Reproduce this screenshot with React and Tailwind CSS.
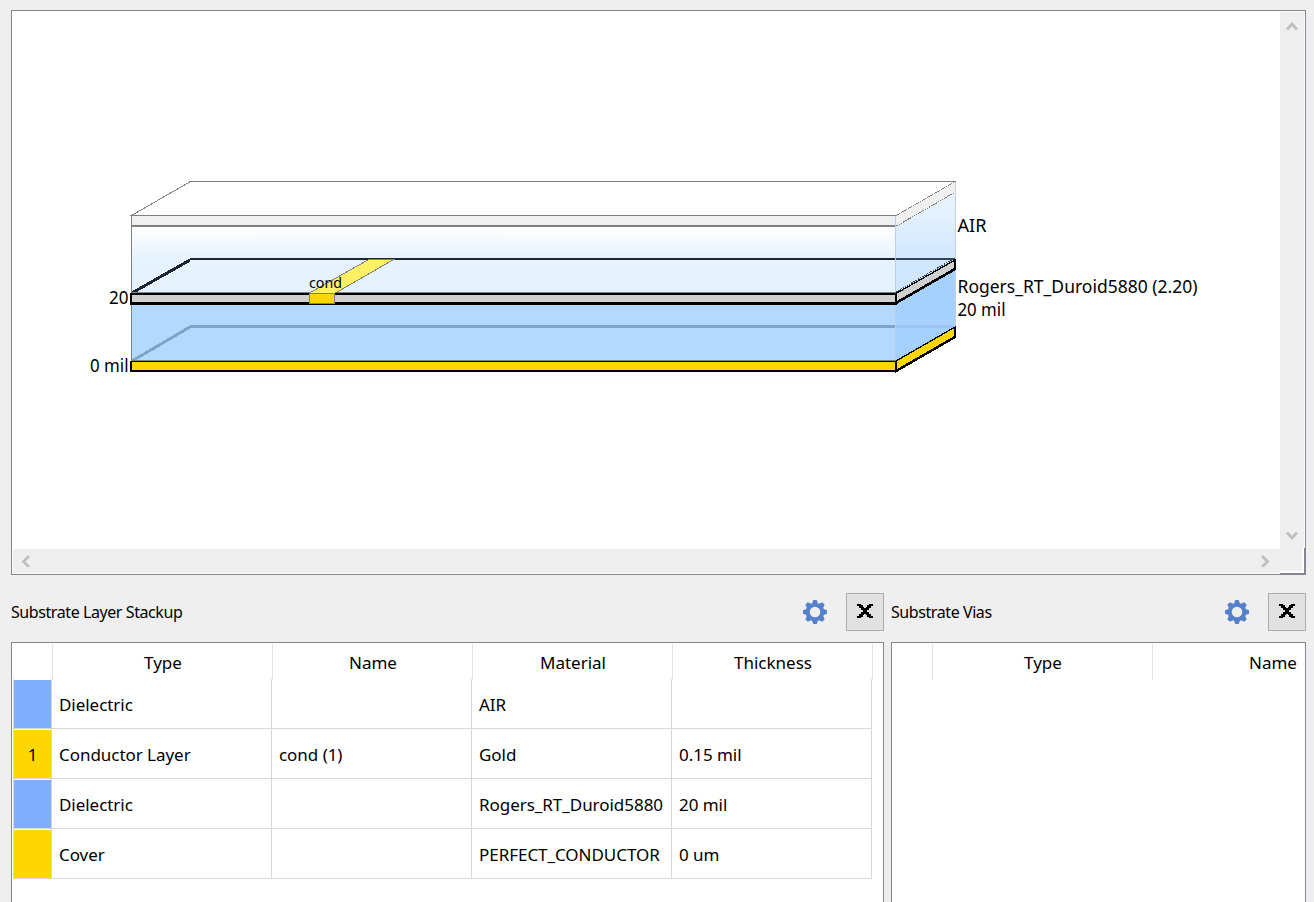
import React from "react";

const rows = [
  { id: "", color: "bg-[#80afff]", type: "Dielectric", name: "", material: "AIR", thickness: "" },
  { id: "1", color: "bg-[#ffd700]", type: "Conductor Layer", name: "cond (1)", material: "Gold", thickness: "0.15 mil" },
  { id: "", color: "bg-[#80afff]", type: "Dielectric", name: "", material: "Rogers_RT_Duroid5880", thickness: "20 mil" },
  { id: "", color: "bg-[#ffd700]", type: "Cover", name: "", material: "PERFECT_CONDUCTOR", thickness: "0 um" },
];

const rotations = [0, 45, 90, 135, 180, 225, 270, 315];

function Gear() {
  return (
    <svg width="26" height="26" viewBox="-13 -13 26 26" className="block shrink-0">
      <circle r="7.3" fill="none" stroke="#5580cc" strokeWidth="4" />
      {rotations.map((r) => (
        <path key={r} d="M-3 -8.500L-1.700 -12H1.700L3 -8.500Z" fill="#5580cc" transform={`rotate(${r})`} />
      ))}
    </svg>
  );
}

function CloseButton() {
  return (
    <button className="flex h-[38px] w-[38px] shrink-0 items-center justify-center border border-[#adadad] bg-[#e1e1e1]">
      <svg width="16" height="14" viewBox="0 0 16 14" className="mb-[3px]" shapeRendering="crispEdges">
        <path
          d="M0 0H4V1H6V3H7V4H9V3H10V1H12V0H16V2H14V4H12V6H10V8H12V10H14V12H16V14H12V13H10V11H9V10H7V11H6V13H4V14H0V12H2V10H4V8H6V6H4V4H2V2H0Z"
          fill="#000"
        />
      </svg>
    </button>
  );
}

function Chevron({ d, className }) {
  return (
    <svg width="12" height="12" viewBox="0 0 12 12" className={className}>
      <path d={d} fill="none" stroke="#bfbfbf" strokeWidth="2.8" />
    </svg>
  );
}

function Stackup() {
  return (
    <svg width="1267" height="537" viewBox="13 12 1267 537" className="block" fontFamily="'Noto Sans', 'Open Sans', sans-serif">
      <defs>
        <linearGradient id="airFront" gradientUnits="userSpaceOnUse" x1="0" y1="227" x2="0" y2="259">
          <stop offset="0" stopColor="#fff" />
          <stop offset="1" stopColor="#e6f2ff" />
        </linearGradient>
        <linearGradient id="airSide" gradientUnits="userSpaceOnUse" x1="0" y1="205" x2="0" y2="262">
          <stop offset="0" stopColor="#e6f2ff" />
          <stop offset="1" stopColor="#d1e7ff" />
        </linearGradient>
      </defs>
      <g shapeRendering="crispEdges">
        {/* dielectric bodies */}
        <path d="M131 227H896V293H131Z" fill="url(#airFront)" />
        <path d="M896 226L956 192V259L896 293Z" fill="url(#airSide)" />
        <path d="M131 304H896V361H131Z" fill="#b3d9ff" />
        <path d="M896 303L956 269V327L896 361Z" fill="#a5d0ff" />
        {/* back edges seen through the dielectrics */}
        <path d="M132 361L190 327" fill="none" stroke="#7fa4ca" strokeWidth="3" />
        <path d="M190 325H896V328H190Z" fill="#7fa4ca" />
        <path d="M896 325H955V328H896Z" fill="#9bc4f2" />
        <path d="M132 293L190 260" fill="none" stroke="#1a2433" strokeWidth="3" />
        <path d="M190 258H896V260H190Z" fill="#1a2433" />
        <path d="M896 258H955V260H896Z" fill="#33455e" />
        {/* top cover */}
        <path d="M131.500 215.500L190.500 181.500H955.500L896.500 215.500Z" fill="#fff" stroke="#808080" />
        <path d="M131 216H896V225H131Z" fill="#f0f0f0" />
        <path d="M896 216L955 182V192L896 226Z" fill="#f0f0f0" />
        <path d="M131 225H896V227H131Z" fill="#808080" />
        <path d="M896.500 226L955.500 192" stroke="#808080" strokeDasharray="1.7 0.8" />
        <path d="M131 215H132V361H131Z" fill="#808080" />
        <path d="M955.500 182V327" stroke="#c7ced6" />
        {/* conductor layer */}
        <path d="M896 293L955 259V269L896 303Z" fill="#d0d0d0" />
        <path d="M896 292L954 258.500" stroke="#33455e" strokeDasharray="1.7 0.8" />
        <path d="M896 293.500L955 260" stroke="#000" strokeWidth="1.300" />
        <path d="M955 259V269L896 303" fill="none" stroke="#000" strokeWidth="2.600" />
        <path d="M130 293H897V305H130Z" fill="#000" />
        <path d="M132 295H895V302H132Z" fill="#d0d0d0" />
        <path d="M131 292H896V293H131Z" fill="#808080" />
        <path d="M309.500 293.500L369.500 259H395.500L335.500 293.500Z" fill="#fff066" />
        <path d="M309.500 293L369.500 259H394.500L335.500 293" fill="none" stroke="#808080" />
        <path d="M309.500 293.500H334.500V303.500H309.500Z" fill="#ffd700" stroke="#808080" />
        {/* bottom cover */}
        <path d="M896 361L955 327V337L896 371Z" fill="#ffd700" stroke="#000" strokeWidth="1.300" />
        <path d="M955 327V337L896 371V361" fill="none" stroke="#000" strokeWidth="2.500" />
        <path d="M130 361H897V372H130Z" fill="#000" />
        <path d="M132 362H895V370H132Z" fill="#ffd700" />
        <path d="M131 360H896V361H131Z" fill="#808080" />
        <path d="M895 216H896V292H895ZM895 305H896V360H895Z" fill="#c0cfde" />
      </g>
      <g fill="#000" fontSize="17.6">
        <text x="957.500" y="232" textLength="29" lengthAdjust="spacingAndGlyphs">AIR</text>
        <text x="957.500" y="293" textLength="240" lengthAdjust="spacingAndGlyphs">Rogers_RT_Duroid5880 (2.20)</text>
        <text x="957.500" y="316" textLength="48" lengthAdjust="spacingAndGlyphs">20 mil</text>
        <text x="109" y="304" textLength="19.500" lengthAdjust="spacingAndGlyphs">20</text>
        <text x="90" y="372" textLength="38.500" lengthAdjust="spacingAndGlyphs">0 mil</text>
        <text x="309" y="288" fontSize="14.500" textLength="33" lengthAdjust="spacingAndGlyphs">cond</text>
      </g>
    </svg>
  );
}

function HeaderCell({ children }) {
  return (
    <div className="flex h-[36px] items-center justify-center border-r border-[#e3e3e3] pl-px pt-px">
      <span>{children}</span>
    </div>
  );
}

function Cell({ children }) {
  return (
    <div className="flex h-[50px] items-center whitespace-nowrap border-b border-r border-[#d8d8d8] pl-[7px] pt-0.5">
      <span>{children}</span>
    </div>
  );
}

function PanelTitle({ children }) {
  return (
    <div className="flex h-[38px] items-center">
      <span className="grow text-[16px] tracking-[-0.42px]">{children}</span>
      <Gear />
      <div className="w-[18px]" />
      <CloseButton />
    </div>
  );
}

export default function App() {
  return (
    <div className="flex h-[902px] w-[1314px] flex-col overflow-hidden bg-[#efefef] pl-[11px] pr-2 pt-2.5 font-['Noto_Sans','Open_Sans',sans-serif] text-[17px] text-black">
      <div className="grid h-[565px] shrink-0 grid-cols-[1267px_1fr] grid-rows-[537px_1fr] border border-[#828790] bg-white p-px">
        <Stackup />
        <div className="flex flex-col items-center justify-between bg-[#efefef] pb-[7px] pt-2">
          <Chevron d="M1 9.500L6 4L11 9.500" />
          <Chevron d="M1 2.500L6 8L11 2.500" />
        </div>
        <div className="flex items-center justify-between bg-[#efefef] pl-[7px] pr-[9px]">
          <Chevron d="M9 1L3.500 6.500L9 12" />
          <Chevron d="M3 1L8.500 6.500L3 12" />
        </div>
        <div className="-mb-px -mr-px -mt-px border-b border-r border-[#828790] bg-white pb-0.5 pr-0.5">
          <div className="h-full bg-[#efefef]" />
        </div>
      </div>

      <div className="mt-[18px] flex grow gap-[7px]">
        <section className="flex w-[873px] shrink-0 flex-col">
          <PanelTitle>Substrate Layer Stackup</PanelTitle>
          <div className="mt-[11px] grow border border-b-0 border-[#828790] bg-white pl-px pt-px">
            <div className="grid grid-cols-[40px_220px_200px_200px_200px]">
              <HeaderCell />
              <HeaderCell>Type</HeaderCell>
              <HeaderCell>Name</HeaderCell>
              <HeaderCell>Material</HeaderCell>
              <HeaderCell>Thickness</HeaderCell>
            </div>
            <div className="-mt-px">
              {rows.map((row, i) => (
                <div key={i} className="grid grid-cols-[39px_220px_200px_200px_200px] tracking-[-0.04px]">
                  <div className="h-[50px] border-b border-l border-r border-[#d8d8d8] bg-white pt-px">
                    <div className={`flex h-full items-center justify-center pt-px ${row.color}`}>{row.id}</div>
                  </div>
                  <Cell>{row.type}</Cell>
                  <Cell>{row.name}</Cell>
                  <Cell>{row.material}</Cell>
                  <Cell>{row.thickness}</Cell>
                </div>
              ))}
            </div>
          </div>
        </section>

        <section className="flex min-w-0 grow flex-col">
          <PanelTitle>Substrate Vias</PanelTitle>
          <div className="mt-[11px] grow overflow-hidden border border-b-0 border-[#828790] bg-white pl-px pt-px">
            <div className="grid grid-cols-[40px_220px_240px]">
              <HeaderCell />
              <HeaderCell>Type</HeaderCell>
              <HeaderCell>Name</HeaderCell>
            </div>
          </div>
        </section>
      </div>
    </div>
  );
}
